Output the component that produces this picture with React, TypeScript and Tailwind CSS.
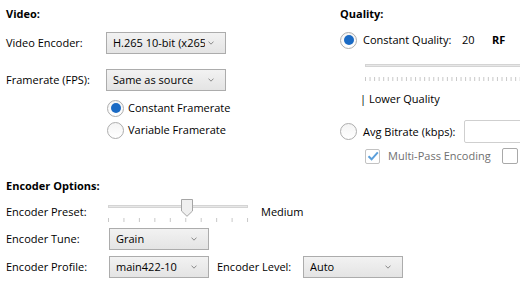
import React from "react";

function Chevron() {
  return (
    <svg width="6" height="4" viewBox="0 0 6 4" className="shrink-0 ml-auto">
      <path d="M0.5 0.6 L3 3.2 L5.5 0.6" fill="none" stroke="#8a8a8a" strokeWidth="1" />
    </svg>
  );
}

function Dropdown({ className, textClass, text }: { className: string; textClass: string; text: string }) {
  return (
    <div
      className={
        "flex items-center h-[22px] shrink-0 border border-[#acacac] bg-gradient-to-b from-[#f2f2f2] to-[#e4e4e4] pl-[6px] pr-[11px] " +
        className
      }
    >
      <span className={"overflow-hidden whitespace-nowrap shrink-0 " + textClass}>{text}</span>
      <Chevron />
    </div>
  );
}

function Radio({ checked }: { checked?: boolean }) {
  return (
    <div className="w-[17px] h-[17px] shrink-0 rounded-full border border-[#adadad] bg-gradient-to-b from-[#f4f4f4] to-white flex items-center justify-center">
      {checked && <div className="w-[10px] h-[10px] rounded-full bg-[#1a6ac4]" />}
    </div>
  );
}

function QualityTicks() {
  const ticks = Array.from({ length: 40 }, (_, i) => i);
  return (
    <svg width="180" height="4" className="shrink-0">
      {ticks.map((i) => (
        <line key={i} x1={i * 4.55 + 0.5} y1="0" x2={i * 4.55 + 0.5} y2="4" stroke="#c8c8c8" strokeWidth="1" />
      ))}
    </svg>
  );
}

function PresetSlider() {
  const ticks = Array.from({ length: 10 }, (_, i) => i);
  return (
    <div className="relative w-[141px] h-[26px] shrink-0">
      <div className="absolute left-0 top-[6px] w-[140px] h-[3px] bg-[#e7e7e7] border border-[#d4d4d4]" />
      <svg width="141" height="4" className="absolute left-0 top-[19px]">
        {ticks.map((i) => (
          <line key={i} x1={i * 15.45 + 0.5} y1="0" x2={i * 15.45 + 0.5} y2="4" stroke="#c8c8c8" strokeWidth="1" />
        ))}
      </svg>
      <svg width="12" height="18" viewBox="0 0 12 18" className="absolute left-[73px] top-0">
        <path d="M0.5 0.5 H11.5 V12 L6 17.3 L0.5 12 Z" fill="#efefef" stroke="#a5a5a5" strokeWidth="1" />
      </svg>
    </div>
  );
}

export default function App() {
  return (
    <div className="w-[520px] h-[281px] overflow-hidden bg-white text-[11px] leading-[16px] text-black font-['Open_Sans','Noto_Sans',sans-serif]">
      <div className="flex h-[168px]">
        <div className="w-[340px] shrink-0 pl-[6px] pt-[6px] flex flex-col">
          <div className="font-bold h-[16px]">Video:</div>
          <div className="flex items-center mt-[10px] h-[22px]">
            <span className="w-[100px] shrink-0">Video Encoder:</span>
            <Dropdown className="w-[120px]" textClass="w-[92px]" text="H.265 10-bit (x265)" />
          </div>
          <div className="flex items-center mt-[15px] h-[22px]">
            <span className="w-[100px] shrink-0">Framerate (FPS):</span>
            <Dropdown className="w-[120px]" textClass="w-[92px]" text="Same as source" />
          </div>
          <div className="flex items-center gap-[4px] mt-[8px] h-[18px] pl-[101px]">
            <Radio checked />
            <span>Constant Framerate</span>
          </div>
          <div className="flex items-center gap-[4px] mt-[4px] h-[18px] pl-[101px]">
            <Radio />
            <span>Variable Framerate</span>
          </div>
        </div>
        <div className="flex-1 min-w-0 pt-[6px] flex flex-col">
          <div className="font-bold h-[16px]">Quality:</div>
          <div className="flex items-center mt-[9px] h-[18px] whitespace-nowrap">
            <Radio checked />
            <span className="ml-[6px] w-[99px] shrink-0">Constant Quality:</span>
            <span className="w-[30px] shrink-0">20</span>
            <span className="font-bold">RF</span>
          </div>
          <div className="mt-[15px] ml-[25px] w-[260px] h-[3px] shrink-0 bg-[#e7e7e7] border border-[#d4d4d4]" />
          <div className="mt-[10px] ml-[25px] h-[4px] flex">
            <QualityTicks />
          </div>
          <div className="mt-[10px] ml-[20px] h-[16px] whitespace-nowrap">| Lower Quality</div>
          <div className="flex items-center mt-[13px] h-[23px] whitespace-nowrap">
            <Radio />
            <span className="ml-[6px] w-[101px] shrink-0">Avg Bitrate (kbps):</span>
            <div className="w-[80px] h-[23px] shrink-0 border border-[#cfcfcf] rounded-[2px] bg-white" />
          </div>
          <div className="flex items-center mt-[5px] ml-[25px] h-[16px] whitespace-nowrap">
            <div className="w-[15px] h-[15px] shrink-0 border border-[#c2c2c2] rounded-[2px] bg-white flex items-center justify-center">
              <svg width="12" height="10" viewBox="0 0 12 10">
                <path d="M1.5 5.2 L4.6 8.3 L10.8 1.4" fill="none" stroke="#5b9fdb" strokeWidth="2" />
              </svg>
            </div>
            <span className="ml-[8px] w-[114px] shrink-0 text-[#707070]">Multi-Pass Encoding</span>
            <div className="w-[16px] h-[16px] shrink-0 border border-[#a9a9a9] rounded-[2px] bg-white" />
          </div>
        </div>
      </div>
      <div className="pl-[6px] flex flex-col">
        <div className="mt-[10px] h-[16px] font-bold">Encoder Options:</div>
        <div className="flex items-center mt-[5px] h-[26px]">
          <span className="w-[102px] shrink-0">Encoder Preset:</span>
          <PresetSlider />
          <span className="ml-[12px]">Medium</span>
        </div>
        <div className="flex items-center mt-[3px] h-[22px]">
          <span className="w-[103px] shrink-0">Encoder Tune:</span>
          <Dropdown className="w-[100px]" textClass="w-[72px]" text="Grain" />
        </div>
        <div className="flex items-center mt-[6px] h-[22px]">
          <span className="w-[103px] shrink-0">Encoder Profile:</span>
          <Dropdown className="w-[100px]" textClass="w-[72px]" text="main422-10" />
          <span className="ml-[8px] w-[86px] shrink-0">Encoder Level:</span>
          <Dropdown className="w-[100px]" textClass="w-[72px]" text="Auto" />
        </div>
      </div>
    </div>
  );
}
